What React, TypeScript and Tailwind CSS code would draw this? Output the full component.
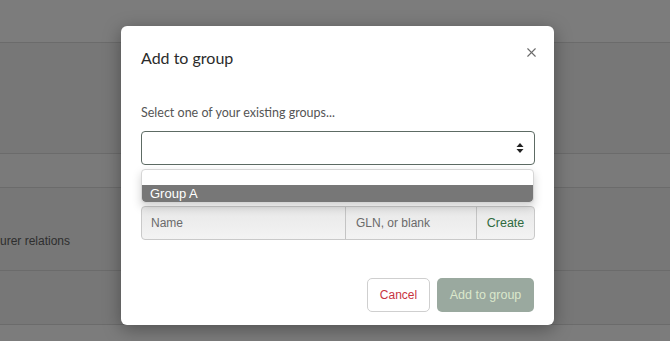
import { X } from 'lucide-react'

const rows = [
  { h: 'h-[43px]', bg: 'bg-[#7c7c7c]', text: '' },
  { h: 'h-[111px]', bg: 'bg-[#777777]', text: '' },
  { h: 'h-[34px]', bg: 'bg-[#7a7a7a]', text: '' },
  { h: 'h-[83px]', bg: 'bg-[#777777]', text: 'urer relations' },
  { h: 'h-[54px]', bg: 'bg-[#777777]', text: '' },
]

function Background() {
  return (
    <div className="flex flex-col">
      {rows.map((r, i) => (
        <div
          key={i}
          className={`${r.h} ${r.bg} border-b border-[#6b6b6b] flex items-center pt-[23px] text-[12px] text-[#2e2e2e] whitespace-nowrap`}
        >
          {r.text}
        </div>
      ))}
      <div className="h-[30px] bg-[#7c7c7c]" />
    </div>
  )
}

export default function App() {
  return (
    <div
      className="relative w-[670px] h-[341px] overflow-hidden"
      style={{ fontFamily: '"Liberation Sans", Arial, sans-serif' }}
    >
      <Background />

      <div className="absolute left-[121px] top-[26px] w-[433px] h-[299px] bg-white rounded-[6px] shadow-[0_4px_18px_rgba(0,0,0,0.35)] px-[20px] pt-[20px] pb-[13px] flex flex-col">
        <div className="flex items-center justify-between h-[24px]">
          <h2 className="text-[16px] text-[#2b2b2b]" style={{ fontFamily: 'Lato, sans-serif' }}>
            Add to group
          </h2>
          <button className="text-[#6b6b6b] -mr-[5px] -mt-[12px]">
            <X size={15} strokeWidth={1.8} />
          </button>
        </div>

        <p
          className="mt-[34px] text-[12.5px] leading-[18px] text-[#555]"
          style={{ fontFamily: 'Lato, sans-serif' }}
        >
          Select one of your existing groups...
        </p>

        <div className="relative mt-[9px]">
          <div className="h-[34px] w-[394px] border border-[#5d6b64] rounded-[4px] flex items-center justify-end pr-[10px]">
            <svg width="8" height="12" viewBox="0 0 8 12" className="text-[#222]">
              <path d="M4 1 L7.5 5 H0.5 Z" fill="currentColor" />
              <path d="M4 11 L7.5 7 H0.5 Z" fill="currentColor" />
            </svg>
          </div>

          <div className="absolute left-0 top-[38px] w-[393px] h-[34px] z-10 rounded-[4px] bg-white border border-[#d6d6d6] shadow-[0_4px_10px_rgba(0,0,0,0.18)] flex flex-col overflow-hidden">
            <div className="h-[15px]" />
            <div className="h-[17px] bg-[#777777] text-white text-[13px] leading-[17px] pl-[8px] rounded-b-[4px]">
              Group A
            </div>
          </div>
        </div>

        <div className="mt-[41px] h-[34px] w-[394px] flex border border-[#c9c9c9] rounded-[4px] overflow-hidden bg-gradient-to-b from-[#e8e8e8] to-[#f3f3f3] text-[12px]">
          <div className="w-[204px] flex items-center pl-[9px] text-[#6a6a6a] border-r border-[#c4c4c4]">
            Name
          </div>
          <div className="w-[131px] flex items-center pl-[10px] text-[#6a6a6a] border-r border-[#c4c4c4]">
            GLN, or blank
          </div>
          <div className="flex-1 flex items-center justify-center text-[#2f6b40] text-[12.5px]">Create</div>
        </div>

        <div className="mt-auto flex justify-end gap-[7px]">
          <button className="h-[34px] w-[63px] rounded-[5px] border border-[#cfcfcf] bg-white text-[12px] text-[#c8343f]">
            Cancel
          </button>
          <button className="h-[34px] w-[97px] rounded-[5px] bg-[#9aa99f] text-[12.5px] text-[#dbe8cc]">
            Add to group
          </button>
        </div>
      </div>
    </div>
  )
}
